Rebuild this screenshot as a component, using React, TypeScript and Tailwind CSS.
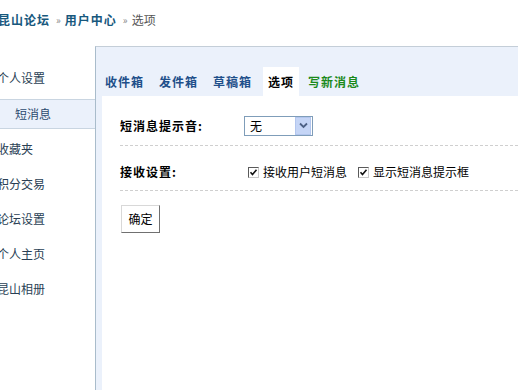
import React from "react";

function Check() {
  return (
    <span className="inline-flex w-[11px] h-[11px] border border-t-[#5a5a5a] border-l-[#5a5a5a] border-r-[#c8c8c8] border-b-[#c8c8c8] bg-white items-center justify-center">
      <svg width="9" height="9" viewBox="0 0 9 9">
        <path d="M1.5 4.2 L3.5 6.5 L7.5 1.8" stroke="#111" strokeWidth="1.6" fill="none" />
      </svg>
    </span>
  );
}

function SideItem({ label }: { label: string }) {
  return (
    <div className="h-[35px] flex items-center -ml-[3px] text-[#2a3f55]">{label}</div>
  );
}

export default function App() {
  return (
    <div className="w-[518px] h-[390px] bg-white overflow-hidden flex flex-col font-['Noto_Sans_CJK_SC','Noto_Sans',sans-serif] text-[12px] leading-[16px]">
      <div className="h-[39px] flex items-center -ml-[2px] shrink-0">
        <span className="font-bold tracking-[1px] text-[#17587d]">昆山论坛</span>
        <span className="ml-[6px] mr-[4px] text-[10px] text-[#888]">»</span>
        <span className="font-bold tracking-[1px] text-[#17587d]">用户中心</span>
        <span className="ml-[6px] mr-[4px] text-[10px] text-[#888]">»</span>
        <span className="text-[#555]">选项</span>
      </div>
      <div className="mt-[7px] flex flex-1 min-h-0">
        <div className="w-[95px] shrink-0 pt-[14px]">
          <SideItem label="个人设置" />
          <div className="mt-[4px] h-[30px] flex items-center pl-[15px] bg-[#ebf1fb] border-y border-[#c9d5e1] text-[#2a4a6e]">
            短消息
          </div>
          <div className="mt-[2px]">
            <SideItem label="收藏夹" />
            <SideItem label="积分交易" />
            <SideItem label="论坛设置" />
            <SideItem label="个人主页" />
            <SideItem label="昆山相册" />
          </div>
        </div>
        <div className="flex-1 flex flex-col border-l border-t border-l-[#a9bccb] border-t-[#c4ced8] bg-[#ebf1fb]">
          <div className="pt-[20px] flex h-[49px] shrink-0 font-bold tracking-[1px]">
            <div className="ml-[9px] h-[29px] flex items-center text-[#1e4f8a]">收件箱</div>
            <div className="ml-[15px] h-[29px] flex items-center text-[#1e4f8a]">发件箱</div>
            <div className="ml-[15px] h-[29px] flex items-center text-[#1e4f8a]">草稿箱</div>
            <div className="ml-[11px] w-[36px] h-[29px] flex items-center justify-center bg-white text-black">选项</div>
            <div className="ml-[9px] h-[29px] flex items-center text-[#1b8a1b]">写新消息</div>
          </div>
          <div className="flex-1 pl-[6px] flex">
            <div className="flex-1 bg-white pt-[10px] pl-[18px]">
              <div className="h-[40px] flex items-center border-b border-dashed border-[#cfcfcf]">
                <div className="w-[124px] font-bold tracking-[1px] text-black">短消息提示音:</div>
                <div className="w-[69px] h-[20px] border border-[#7f9db9] flex items-center justify-between bg-white">
                  <span className="pl-[5px] text-black">无</span>
                  <span className="w-[16px] h-[18px] mr-[1px] bg-[#c5d5f6] border border-[#b3c6ee] flex items-center justify-center">
                    <svg width="9" height="7" viewBox="0 0 9 7">
                      <path d="M1 1.5 L4.5 5 L8 1.5" stroke="#4d6185" strokeWidth="1.8" fill="none" />
                    </svg>
                  </span>
                </div>
              </div>
              <div className="h-[45px] pt-[8px] flex items-center border-b border-dashed border-[#cfcfcf]">
                <div className="w-[124px] font-bold tracking-[1px] text-black">接收设置:</div>
                <div className="ml-[4px] flex items-center text-black">
                  <Check />
                  <span className="ml-[4px]">接收用户短消息</span>
                  <span className="ml-[11px] inline-flex"><Check /></span>
                  <span className="ml-[4px]">显示短消息提示框</span>
                </div>
              </div>
              <div className="mt-[14px] ml-[1px] w-[39px] h-[28px] flex items-center justify-center bg-white border border-t-[#d8d8d8] border-l-[#d8d8d8] border-r-[#707070] border-b-[#707070] text-black">
                确定
              </div>
            </div>
          </div>
        </div>
      </div>
    </div>
  );
}
